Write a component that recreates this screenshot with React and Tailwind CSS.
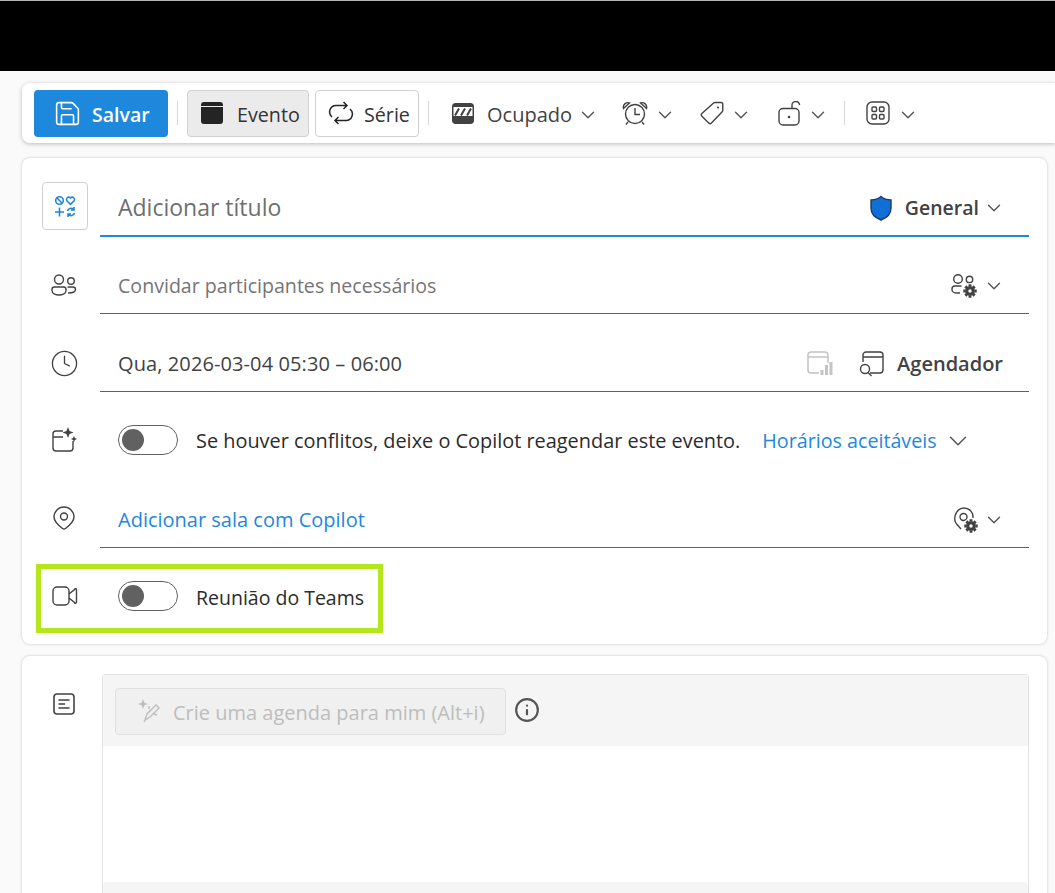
import React from 'react';
import { ChevronDown, Save, Clock, Info } from 'lucide-react';

const font = "font-['Open_Sans','Noto_Sans',sans-serif]";

const Chevron = ({ className = '' }) => (
  <ChevronDown strokeWidth={1.5} className={`w-[22px] h-[22px] -mx-[2px] text-[#555] ${className}`} />
);

const Divider = () => <div className="w-px h-6 bg-[#d6d6d6]" />;

// little gear used on the attendee and location options
const Gear = ({ x, y }) => (
  <g transform={`translate(${x} ${y}) scale(1.2)`} stroke="none">
    <circle r="6.500" fill="#fff" />
    <g fill="#424242">
      <circle r="4" />
      <path d="M-1.200-5.600h2.400v2h-2.400zM-1.200 3.600h2.400v2h-2.400zM-5.600-1.200h2v2.400h-2zM3.600-1.200h2v2.400h-2z" />
      <path d="M-4.700-3-3-4.700-1.500-3.200-3.200-1.500zM3-4.700 4.700-3 3.200-1.500 1.500-3.200zM-4.700 3-3 4.700-1.500 3.200-3.200 1.500zM3 4.700 4.700 3 3.200 1.500 1.500 3.200z" />
    </g>
    <circle r="1.400" fill="#fff" />
  </g>
);

const Toggle = ({ className = '' }) => (
  <div className={`w-[60px] h-[30px] rounded-full border border-[#616161] bg-white flex items-center pl-[3px] shrink-0 ${className}`}>
    <div className="w-[22px] h-[22px] rounded-full bg-[#616161]" />
  </div>
);

const Row = ({ icon, children, className = '' }) => (
  <div className={`flex ${className}`}>
    <div className="w-[78px] flex justify-center items-center pl-[6px] shrink-0">{icon}</div>
    {children}
  </div>
);

const App = () => {
  return (
    <div className={`h-[893px] overflow-hidden bg-[#fafafa] text-[#424242] ${font}`}>
      {/* Masked top of the window */}
      <div className="h-[71px] bg-black border-t border-t-[#b5b5b5]" />

      {/* Toolbar */}
      <div className="mt-3 ml-[22px] h-[60px] bg-white rounded-l-lg shadow-[0_1px_4px_rgba(0,0,0,0.25)] flex items-center pl-3 text-[20px]">
        <button className="w-[134px] h-[47px] rounded bg-[#1e88dc] text-white font-semibold text-[19.500px] flex items-center pl-[19px] gap-[10px]">
          <Save strokeWidth={1.3} className="w-[29px] h-[29px]" />
          <span className="pt-[4px]">Salvar</span>
        </button>
        <div className="mx-[9px]"><Divider /></div>
        <button className="w-[122px] h-[47px] rounded border border-[#d1d1d1] bg-[#ebebeb] flex items-center pl-[13px] gap-[14px] text-[#333]">
          <div className="w-[22px] h-[22px] rounded-[3px] bg-[#242424] flex flex-col"><div className="h-[5px] border-b border-[#ebebeb]" /></div>
          <span className="pt-[4px] text-[19.700px]">Evento</span>
        </button>
        <button className="ml-[6px] w-[104px] h-[47px] rounded border border-[#d1d1d1] bg-white flex items-center pl-[12px] gap-[10px] text-[#333]">
          <svg width="26" height="24" viewBox="0 0 26 24" fill="none" stroke="#242424" strokeWidth="1.500">
            <path d="M15.500 1 19 4.500 15.500 8M19 4.500H8A6.500 6.500 0 0 0 4 16" />
            <path d="M10.500 23 7 19.500l3.500-3.500M7 19.500h11A6.500 6.500 0 0 0 22 8" />
          </svg>
          <span className="pt-[4px] text-[19.700px]">Série</span>
        </button>
        <div className="mx-[9px]"><Divider /></div>
        <svg className="ml-[14px]" width="22" height="21" viewBox="0 0 22 21">
          <rect x="0.750" y="0.750" width="20.500" height="19.500" rx="3" fill="#fff" stroke="#424242" strokeWidth="1.500" />
          <path d="M1 13h20v4.500a3 3 0 0 1-3 3H4a3 3 0 0 1-3-3z" fill="#424242" />
          <rect x="1" y="1" width="20" height="3" fill="#424242" />
          <path d="M3 12.500l4-7M9 12.500l4-7M15 12.500l4-7" stroke="#424242" strokeWidth="2" />
        </svg>
        <span className="ml-[13px] pt-[4px]">Ocupado</span>
        <Chevron className="ml-[5px] mt-[4px]" />
        <svg className="ml-[25px]" width="26" height="24" viewBox="0 0 26 24" fill="none" stroke="#424242" strokeWidth="1.400">
          <circle cx="13" cy="13" r="9.500" />
          <path d="M13 7v6.500h5M1.500 7.500C.5 4 4 .5 7.500 2zM24.500 7.500C25.500 4 22 .5 18.500 2zM6 21l-2 2.500M20 21l2 2.500" />
        </svg>
        <Chevron className="ml-[6px] mt-[4px]" />
        <svg className="ml-[26px]" width="24" height="24" viewBox="0 0 24 24" fill="none" stroke="#424242" strokeWidth="1.400">
          <path d="M15 1.500h6a1.800 1.800 0 0 1 1.800 1.800v6a2 2 0 0 1-.6 1.400L11.500 22a2 2 0 0 1-2.800 0l-6.800-6.800a2 2 0 0 1 0-2.800L13.600 2.100A2 2 0 0 1 15 1.500z" />
          <circle cx="18" cy="6.500" r="1.100" fill="#424242" stroke="none" />
        </svg>
        <Chevron className="ml-[6px] mt-[4px]" />
        <svg className="ml-[28px]" width="24" height="25" viewBox="0 0 24 25" fill="none" stroke="#424242" strokeWidth="1.400">
          <rect x="1" y="7.500" width="20" height="16.500" rx="4" />
          <path d="M14 7.500V4.500a3.800 3.800 0 0 1 7.600-.5" />
          <circle cx="11" cy="16" r="1.300" fill="#424242" stroke="none" />
        </svg>
        <Chevron className="ml-[5px] mt-[4px]" />
        <div className="ml-[17px]"><Divider /></div>
        <svg className="ml-[21px]" width="24" height="24" viewBox="0 0 24 24" fill="none" stroke="#424242" strokeWidth="1.400">
          <rect x="1" y="1" width="22" height="22" rx="5" />
          <rect x="6" y="6" width="4.500" height="4.500" rx="1" />
          <rect x="13.500" y="6" width="4.500" height="4.500" rx="1" />
          <rect x="6" y="13.500" width="4.500" height="4.500" rx="1" />
          <rect x="13.500" y="13.500" width="4.500" height="4.500" rx="1" />
        </svg>
        <Chevron className="ml-[7px] mt-[4px]" />
      </div>

      {/* Event details card */}
      <div className="mt-[15px] ml-[22px] mr-2 h-[486px] bg-white rounded-lg shadow-[0_0_3px_rgba(0,0,0,0.22)] pt-[24px] pr-[18px]">
        <div className="flex h-[55px]">
          <div className="w-[78px] pl-[20px] shrink-0">
            <div className="w-[46px] h-[48px] rounded border border-[#d1d1d1] flex items-center justify-center">
              <svg width="24" height="24" viewBox="0 0 24 24" fill="none" stroke="#1e88dc" strokeWidth="1.600">
                <circle cx="6.500" cy="6.500" r="3.800" />
                <path d="M3.800 3.800l5.400 5.400" />
                <path d="M17.500 10.400l-3.600-3.700a2.300 2.300 0 0 1 3.300-3.100l.3.300.3-.3a2.300 2.300 0 0 1 3.300 3.100z" />
                <path d="M2 18h9M6.500 13.500v9" />
                <path d="M14.500 17a3.500 3.500 0 0 1 6-1.500M21.500 19a3.500 3.500 0 0 1-6 1.500M21 13v3h-3M15 23v-3h3" />
              </svg>
            </div>
          </div>
          <div className="flex-1 border-b-2 border-[#1e88dc] flex items-center pl-[18px] pr-[26px] pb-[2px]">
            <span className="text-[23px] text-[#6f6f6f]">Adicionar título</span>
            <svg className="ml-auto" width="24" height="26" viewBox="0 0 24 26">
              <path d="M12 1.500c2.600 2.200 6 3.400 10 3.400V13c0 5.800-3.600 9.700-10 12C5.600 22.700 2 18.800 2 13V4.900c4 0 7.400-1.200 10-3.400z" fill="#0f6fd6" stroke="#1f3a5c" strokeWidth="1.400" />
            </svg>
            <span className="ml-[12px] text-[19.500px] font-semibold">General</span>
            <Chevron className="ml-[4px]" />
          </div>
        </div>

        <Row
          className="h-[77px]"
          icon={
            <svg className="mt-[18px]" width="26" height="22" viewBox="0 0 26 22" fill="none" stroke="#424242" strokeWidth="1.400">
              <circle cx="8" cy="5.500" r="4.500" />
              <circle cx="20" cy="7" r="3.300" />
              <path d="M3.500 13h9a2.500 2.500 0 0 1 2.500 2.500v1c0 3-3.500 4.500-7 4.500s-7-1.500-7-4.500v-1A2.500 2.500 0 0 1 3.500 13z" />
              <path d="M16.500 13H22a2.500 2.500 0 0 1 2.500 2.500c0 2.500-3 3.500-7.500 3.500" />
            </svg>
          }
        >
          <div className="flex-1 border-b border-[#616161] flex items-center pl-[18px] pr-[26px] pt-[21px]">
            <span className="text-[19.600px] text-[#757575]">Convidar participantes necessários</span>
            <svg className="ml-auto" width="28" height="26" viewBox="0 0 28 26" fill="none" stroke="#424242" strokeWidth="1.400">
              <circle cx="8" cy="6" r="4.300" />
              <circle cx="19.500" cy="6.500" r="3.200" />
              <path d="M11.500 13H5a3 3 0 0 0-3 3v1c0 1.800 2.500 3 5 3h3" />
              <Gear x={20} y={18} />
            </svg>
            <Chevron className="ml-[5px]" />
          </div>
        </Row>

        <Row
          className="h-[78px]"
          icon={<Clock strokeWidth={1.1} className="w-[29px] h-[29px] mt-[20px]" />}
        >
          <div className="flex-1 border-b border-[#616161] flex items-center pl-[18px] pr-[26px] pt-[22px]">
            <span className="text-[20px] tracking-[0.1px]">Qua, 2026-03-04 05:30 – 06:00</span>
            <svg className="ml-auto" width="26" height="26" viewBox="0 0 26 26" fill="none" stroke="#c4c4c4" strokeWidth="1.500">
              <path d="M12 22H4a3 3 0 0 1-3-3V4a3 3 0 0 1 3-3h14a3 3 0 0 1 3 3v8M1 6h20" />
              <path d="M15 24v-5M19.500 24V14M24 24V11" strokeWidth="3" />
            </svg>
            <svg className="ml-[26px]" width="26" height="26" viewBox="0 0 26 26" fill="none" stroke="#424242" strokeWidth="1.400">
              <path d="M4 11V4a3 3 0 0 1 3-3h14a3 3 0 0 1 3 3v15a3 3 0 0 1-3 3H11M4 6h20" />
              <circle cx="6" cy="18" r="4.500" />
              <path d="M9 21.500l3.500 3.500" />
            </svg>
            <span className="ml-[12px] text-[20px] font-semibold">Agendador</span>
          </div>
        </Row>

        <Row
          className="h-[78px]"
          icon={
            <svg className="mt-[18px]" width="26" height="28" viewBox="0 0 26 28" fill="none" stroke="#424242" strokeWidth="1.400">
              <path d="M12 5H5a3 3 0 0 0-3 3v14a3 3 0 0 0 3 3h14a3 3 0 0 0 3-3v-7M2 11h10" />
              <path d="M17 1l1.500 4 4 1.500-4 1.500-1.500 4-1.500-4-4-1.500 4-1.500z" fill="#424242" stroke="none" />
              <path d="M23 10l.9 2.100 2.100.9-2.100.9-.9 2.100-.9-2.100-2.100-.9 2.100-.9z" fill="#424242" stroke="none" />
            </svg>
          }
        >
          <div className="flex-1 flex items-center pl-[18px] pt-[20px]">
            <Toggle className="mb-[2px]" />
            <span className="ml-[18px] text-[19.900px] text-[#2b2b2b]">Se houver conflitos, deixe o Copilot reagendar este evento.</span>
            <span className="ml-[22px] text-[19.700px] text-[#1e88dc]">Horários aceitáveis</span>
            <ChevronDown strokeWidth={1.2} className="ml-[6px] w-[30px] h-[30px] text-[#555]" />
          </div>
        </Row>

        <Row
          className="h-[78px]"
          icon={
            <svg className="mt-[18px]" width="22" height="24" viewBox="0 0 22 24" fill="none" stroke="#424242" strokeWidth="1.400">
              <path d="M11 1a10 10 0 0 1 10 10c0 4-4 8-8.500 11.500a2.500 2.500 0 0 1-3 0C5 19 1 15 1 11A10 10 0 0 1 11 1z" />
              <circle cx="11" cy="10.500" r="3.500" />
            </svg>
          }
        >
          <div className="flex-1 border-b border-[#616161] flex items-center pl-[18px] pr-[26px] pt-[22px]">
            <span className="text-[20px] text-[#1e88dc]">Adicionar sala com Copilot</span>
            <svg className="ml-auto" width="28" height="28" viewBox="0 0 28 28" fill="none" stroke="#424242" strokeWidth="1.400">
              <path d="M9 23l-4-4.500C0 13 4 2 12 2c6 0 9.500 5 9 10" />
              <circle cx="11.500" cy="11" r="3.500" />
              <Gear x={19} y={20} />
            </svg>
            <Chevron className="ml-[3px]" />
          </div>
        </Row>

        {/* Highlighted Teams row */}
        <div className="mt-[16px] ml-[14px] w-[347px] h-[69px] border-[5px] border-[#b5e61d] flex items-center pb-[5px]">
          <svg className="ml-[11px]" width="26" height="22" viewBox="0 0 26 22" fill="none" stroke="#424242" strokeWidth="1.400">
            <rect x="1" y="2" width="16" height="18" rx="4" />
            <path d="M17 9l5.500-4.500a1 1 0 0 1 2 .5v12a1 1 0 0 1-2 .5L17 13" />
          </svg>
          <div className="ml-[40px]"><Toggle /></div>
          <span className="ml-[18px] text-[19.500px] text-[#2b2b2b] pt-[3px]">Reunião do Teams</span>
        </div>
      </div>

      {/* Description card */}
      <div className="mt-[12px] ml-[22px] mr-2 h-[260px] bg-white rounded-lg shadow-[0_0_3px_rgba(0,0,0,0.22)] pt-[18px] pr-[18px] flex">
        <div className="w-[80px] flex justify-center pl-[4px] pt-[18px] shrink-0">
          <svg width="24" height="24" viewBox="0 0 24 24" fill="none" stroke="#424242" strokeWidth="1.600">
            <rect x="2" y="2" width="20" height="20" rx="3" />
            <path d="M6.500 8h11M6.500 12h6.500M6.500 16h11" />
          </svg>
        </div>
        <div className="flex-1 h-[260px] rounded-t border border-[#e3e3e3] border-b-0 flex flex-col">
          <div className="h-[71px] bg-[#f5f5f5] flex items-center pl-3 pt-[1px]">
            <button className="w-[391px] h-[47px] rounded bg-[#f0f0f0] border border-[#e0e0e0] flex items-center pl-[20px] text-[20px] text-[#bdbdbd]">
              <svg width="26" height="26" viewBox="0 0 26 26" fill="none" stroke="#bdbdbd" strokeWidth="1.400">
                <path d="M7 1l1.300 3.700L12 6 8.300 7.300 7 11 5.700 7.300 2 6l3.700-1.300z" fill="#bdbdbd" stroke="none" />
                <path d="M9 22l2-6 9-9 3 3-9 9zM9 22l-1 2M13 8v3M18 16l3 1" />
              </svg>
              <span className="ml-[11px] pt-[3px]">Crie uma agenda para mim (Alt+i)</span>
            </button>
            <Info strokeWidth={2} className="ml-[8px] mb-[2px] w-[26px] h-[26px] text-[#555]" />
          </div>
          <div className="h-[136px] bg-white" />
          <div className="flex-1 bg-[#f5f5f5] rounded-t" />
        </div>
      </div>
    </div>
  );
};

export default App;
